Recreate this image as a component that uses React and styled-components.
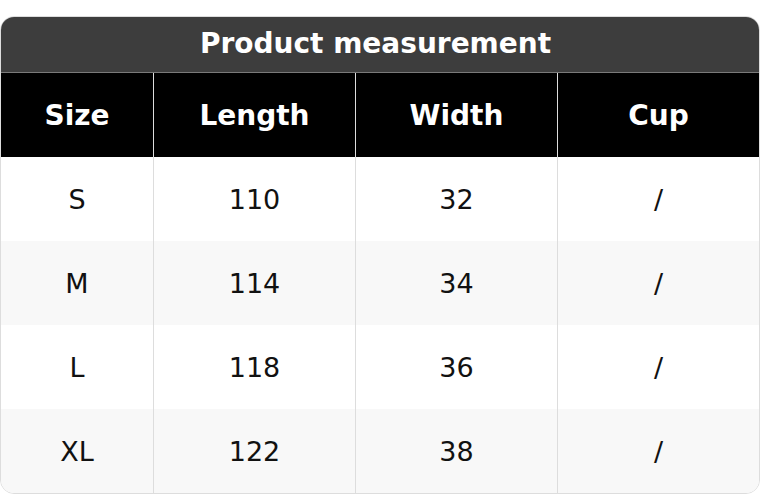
import React from 'react';
import styled, {createGlobalStyle} from "styled-components";

const GlobalStyle = createGlobalStyle`
  body {
    margin: 0;
    background: #ffffff;
    font-family: "DejaVu Sans", "Liberation Sans", sans-serif;
  }
`;

const Page = styled.div`
  width: 760px;
  padding-top: 16px;
`;

const Card = styled.div`
  border: 1px solid #dddddd;
  border-radius: 14px;
  overflow: hidden;
  background: #ffffff;
`;

const Title = styled.div`
  height: 56px;
  box-sizing: border-box;
  padding: 0 9px 2px 0;
  border-bottom: 1px solid #7a7a7a;
  background: #3d3d3d;
  color: #ffffff;
  font-weight: bold;
  font-size: 28px;
  display: flex;
  align-items: center;
  justify-content: center;
`;

const Row = styled.div`
  display: grid;
  grid-template-columns: 152px 1fr 1fr 1fr;
  height: 84px;
  background: ${props => props.head ? "#000000" : (props.alt ? "#f8f8f8" : "#ffffff")};
`;

const Cell = styled.div`
  display: flex;
  align-items: center;
  justify-content: center;
  color: ${props => props.head ? "#ffffff" : "#111111"};
  font-weight: ${props => props.head ? "bold" : "normal"};
  font-size: ${props => props.head ? "28px" : "27px"};
  & + & {
    border-left: ${props => props.head ? "1px solid #777777" : "1px solid #dddddd"};
  }
`;

const headers = ["Size", "Length", "Width", "Cup"];
const rows = [
    ["S", "110", "32", "/"],
    ["M", "114", "34", "/"],
    ["L", "118", "36", "/"],
    ["XL", "122", "38", "/"],
];

export default function App() {
    return (
        <Page>
            <GlobalStyle/>
            <Card>
                <Title>Product measurement</Title>
                <Row head>
                    {headers.map(h => <Cell head key={h}>{h}</Cell>)}
                </Row>
                {rows.map((r, i) => (
                    <Row key={r[0]} alt={i % 2 === 1}>
                        {r.map((v, j) => <Cell key={j}>{v}</Cell>)}
                    </Row>
                ))}
            </Card>
        </Page>
    );
}
